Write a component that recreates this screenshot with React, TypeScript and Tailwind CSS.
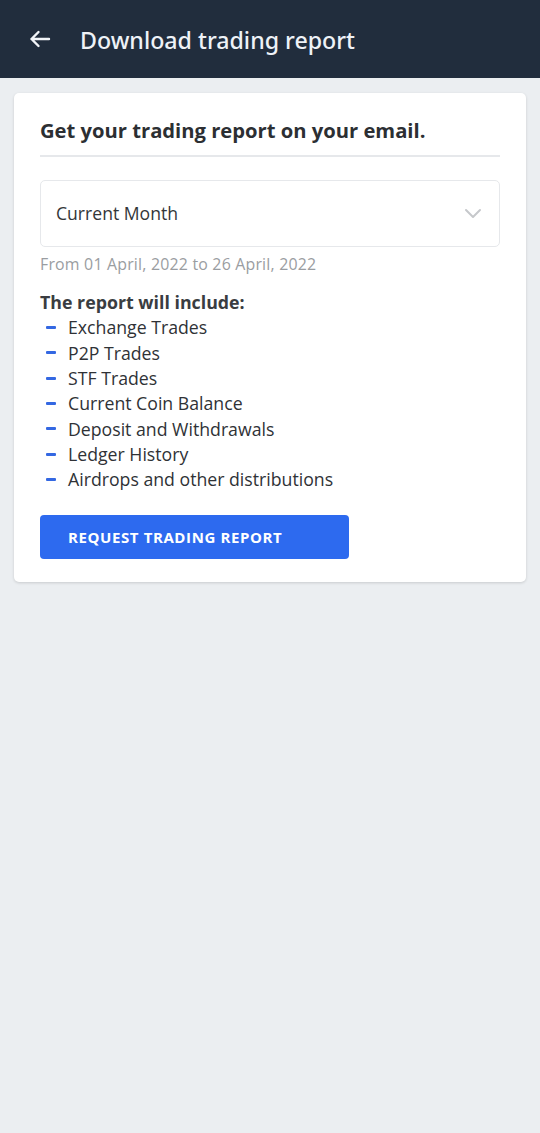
import React from "react";

const items = [
  "Exchange Trades",
  "P2P Trades",
  "STF Trades",
  "Current Coin Balance",
  "Deposit and Withdrawals",
  "Ledger History",
  "Airdrops and other distributions",
];

export default function App() {
  return (
    <div className="min-h-[1133px] w-[540px] bg-[#ebeef1]" style={{ fontFamily: '"Open Sans", sans-serif' }}>
      <div className="h-[78px] bg-[#212d3d] flex items-center pl-[29px]">
        <svg width="22" height="18" viewBox="0 0 22 18" fill="none" stroke="#f1f4f8" strokeWidth="2.4" strokeLinecap="round" strokeLinejoin="round">
          <path d="M20 9H2.5M9.5 2L2.5 9l7 7" />
        </svg>
        <span className="ml-[29px] mt-[2px] text-[23.2px] font-medium text-[#eef2f7]" style={{ fontFamily: '"Noto Sans", sans-serif' }}>
          Download trading report
        </span>
      </div>
      <div className="pt-[15px] px-[14px]">
        <div className="bg-white rounded-[5px] shadow-[0_1px_3px_rgba(0,0,0,0.15)] px-[26px] pt-[23px] pb-[23px]">
          <div className="text-[20.2px] font-bold text-[#2c2f33] leading-[28px]">Get your trading report on your email.</div>
          <div className="mt-[11px] h-[2px] bg-[#e6e8eb]" />
          <div className="mt-[23px] h-[67px] border border-[#e6e8eb] rounded-[5px] flex items-center justify-between pl-[15px] pr-[17px]">
            <span className="text-[17.6px] text-[#333639]">Current Month</span>
            <svg width="18" height="11" viewBox="0 0 18 11" fill="none" stroke="#c6c8cb" strokeWidth="2" strokeLinecap="round" strokeLinejoin="round">
              <path d="M2 2l7 7 7-7" />
            </svg>
          </div>
          <div className="mt-[6px] text-[15.9px] text-[#9a9da1] tracking-[0.2px]">From 01 April, 2022 to 26 April, 2022</div>
          <div className="mt-[13px] text-[17.8px] font-bold text-[#3a3d41] leading-[25px]">The report will include:</div>
          <ul>
            {items.map((t) => (
              <li key={t} className="flex items-center h-[25.33px]">
                <span className="ml-[6px] w-[10px] h-[3px] bg-[#3468e2] rounded-[1px]" />
                <span className="ml-[12px] text-[17.7px] text-[#2f3236]">{t}</span>
              </li>
            ))}
          </ul>
          <button className="mt-[23px] w-[309px] h-[44px] bg-[#2d6aef] rounded-[4px] text-left pl-[28px] text-[15px] font-bold text-white tracking-[0.6px]">
            REQUEST TRADING REPORT
          </button>
        </div>
      </div>
    </div>
  );
}
